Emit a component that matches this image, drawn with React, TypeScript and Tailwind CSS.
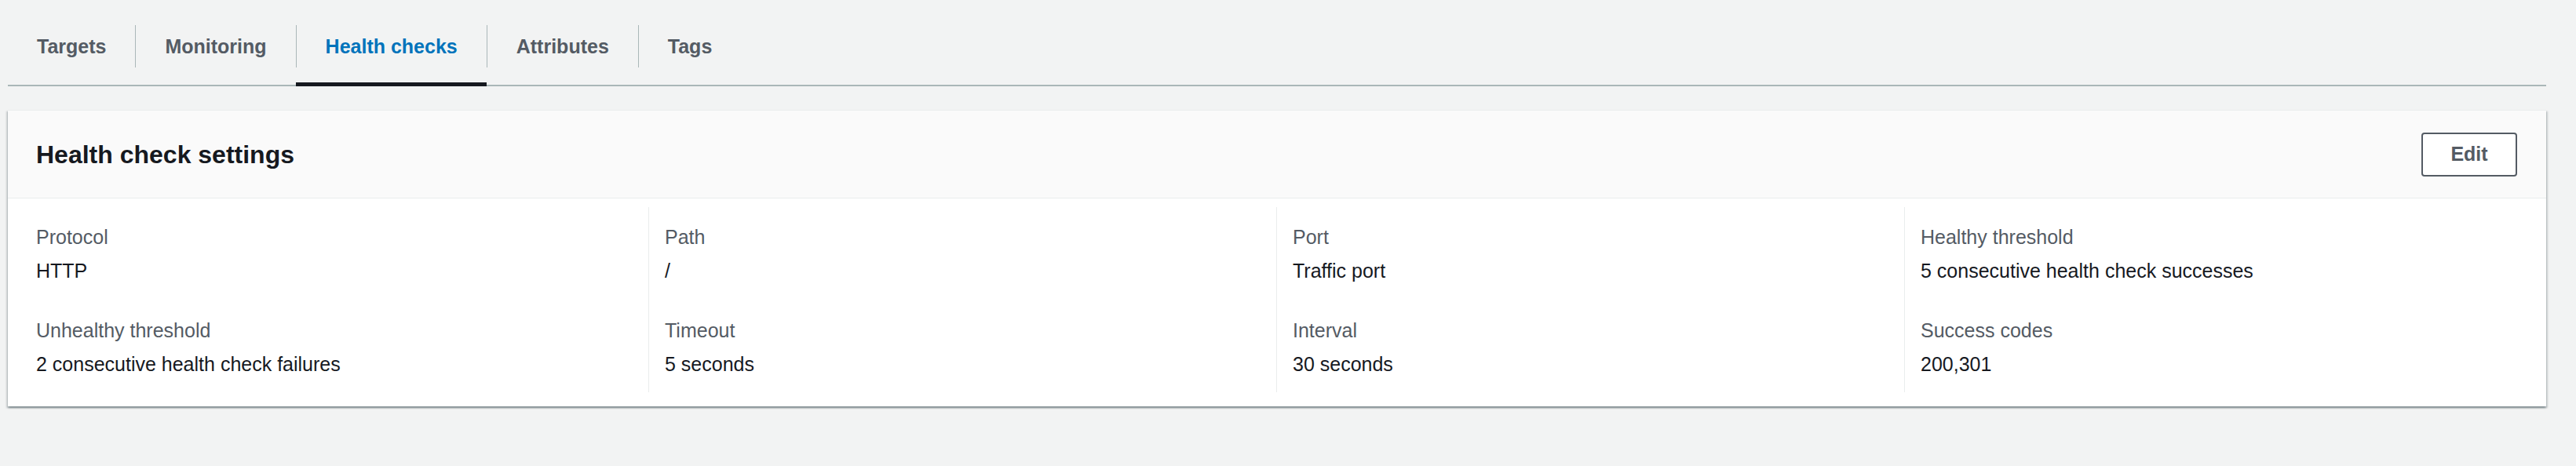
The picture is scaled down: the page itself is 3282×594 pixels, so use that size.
const tabs = ["Targets", "Monitoring", "Health checks", "Attributes", "Tags"];
const active = "Health checks";

const columns = [
  [
    { label: "Protocol", value: "HTTP" },
    { label: "Unhealthy threshold", value: "2 consecutive health check failures" },
  ],
  [
    { label: "Path", value: "/" },
    { label: "Timeout", value: "5 seconds" },
  ],
  [
    { label: "Port", value: "Traffic port" },
    { label: "Interval", value: "30 seconds" },
  ],
  [
    { label: "Healthy threshold", value: "5 consecutive health check successes" },
    { label: "Success codes", value: "200,301" },
  ],
];

export default function App() {
  return (
    <div className="min-h-screen bg-[#f2f3f3] font-['Liberation_Sans',Arial,sans-serif] pl-[10px] pr-[38px]">
      {/* tab strip */}
      <div className="flex pt-[32px] border-b-2 border-[#aab7b8]">
        {tabs.map((t, i) => {
          const isActive = t === active;
          return (
            <div key={t} className="relative flex flex-col">
              <div
                className={`h-[54px] flex items-center pt-[2px] px-[37px] text-[25px] font-bold ${
                  i > 0 ? "border-l border-[#aab7b8]" : ""
                } ${isActive ? "text-[#0073bb]" : "text-[#545b64]"}`}
              >
                {t}
              </div>
              <div className="h-[22px]" />
              {isActive && <div className="absolute left-0 right-0 -bottom-[2px] h-[5px] bg-[#16191f]" />}
            </div>
          );
        })}
      </div>

      {/* settings card */}
      <div className="mt-[30px] bg-white border-t border-[#eaeded] shadow-[0_2px_2px_0_rgba(0,28,36,0.3),2px_2px_2px_0_rgba(0,28,36,0.15),-2px_2px_2px_0_rgba(0,28,36,0.15)]">
        <div className="h-[112px] bg-[#fafafa] border-b border-[#eaeded] flex items-center justify-between pl-[36px] pr-[37px]">
          <h2 className="text-[32px] font-bold text-[#16191f]">Health check settings</h2>
          <button className="w-[122px] h-[56px] rounded-[4px] border-2 border-[#545b64] bg-white text-[25px] font-bold text-[#545b64]">
            Edit
          </button>
        </div>
        <div className="grid grid-cols-4 pl-[16px] pr-[18px] pt-[11px] pb-[18px]">
          {columns.map((col, i) => (
            <div
              key={i}
              className={`pl-[20px] pt-[18px] pb-[16px] flex flex-col gap-[36px] ${
                i > 0 ? "border-l border-[#eaeded]" : ""
              }`}
            >
              {col.map((item) => (
                <div key={item.label} className="text-[25px]">
                  <div className="leading-[40px] mb-[3px] text-[#545b64]">{item.label}</div>
                  <div className="leading-[40px] text-[#16191f]">{item.value}</div>
                </div>
              ))}
            </div>
          ))}
        </div>
      </div>
    </div>
  );
}
